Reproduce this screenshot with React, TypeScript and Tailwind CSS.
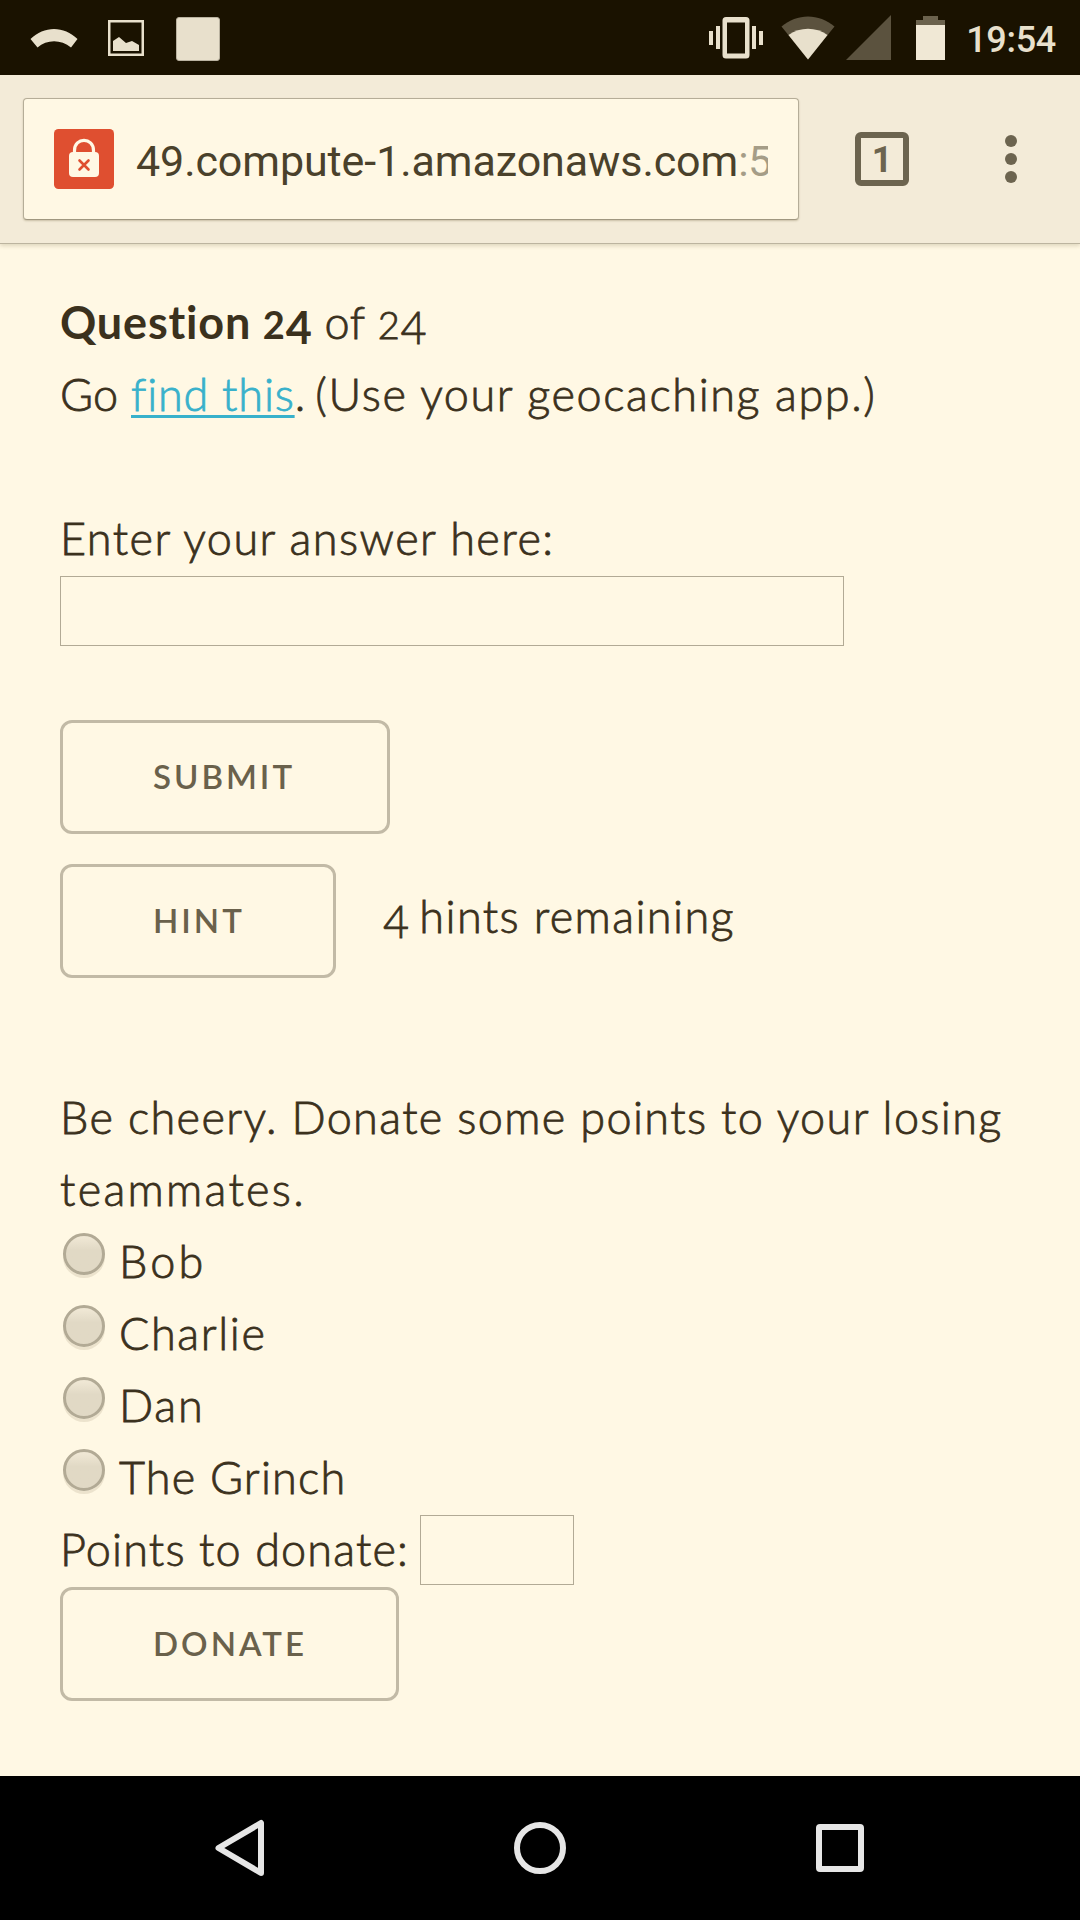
import type { ReactNode } from "react";

function StatusBar() {
  return (
    <header className="flex h-[75px] items-center justify-between bg-[#1a1200] pl-[30px] pr-[24px]">
      <div className="flex items-center">
        <svg width="48" height="24" viewBox="0 0 48 24" className="text-[#e8e0cc]">
          <path d="M0.5 13C14-0.5 34-0.5 47.5 13L41 21.500C31 13 17 13 7.500 21.500Z" fill="currentColor" />
        </svg>
        <svg width="36" height="36" viewBox="0 0 36 36" className="ml-[30px]">
          <path d="M1.250 1.250H34.750V34.750H1.250Z" fill="none" stroke="#e8e0cc" strokeWidth="2.500" />
          <path d="M5 31V21L11 17L18 23L24 21L31 25V31Z" fill="#e8e0cc" />
        </svg>
        <div className="ml-[32px] mt-[2px] h-[44px] w-[44px] rounded-[3px] border border-[#b9b2a0] bg-[#e8e0cc]" />
      </div>
      <div className="flex items-center">
        <svg width="54" height="42" viewBox="0 0 54 42" fill="#e8e0cc">
          <path d="M0 14h4v14H0zM7 9h4v23H7zM43 9h4v23h-4zM50 14h4v14h-4z" />
          <path fillRule="evenodd" d="M17 0H37A3.500 3.500 0 0 1 40.500 3.500V38A3.500 3.500 0 0 1 37 41.500H17A3.500 3.500 0 0 1 13.500 38V3.500A3.500 3.500 0 0 1 17 0ZM18 5.500V36.500H36V5.500Z" />
        </svg>
        <svg width="54" height="44" viewBox="0 0 54 44" className="ml-[18px]">
          <path d="M0.500 10.500C16-3 38-3 53.500 10.500L27 43.500Z" fill="#5b523e" />
          <path d="M7.500 19C19 10.500 35 10.500 46.500 19L27 43.500Z" fill="#e8e0cc" />
        </svg>
        <svg width="45" height="45" viewBox="0 0 45 45" className="ml-[11px]">
          <path d="M45 0V45H0Z" fill="#5b523e" />
        </svg>
        <svg width="29" height="44" viewBox="0 0 29 44" className="ml-[25px]">
          <path d="M7 0H22V4H29V9H0V4H7Z" fill="#6b624d" />
          <path d="M0 9H29V44H0Z" fill="#f0e8d5" />
        </svg>
        <span className="ml-[21px] mt-[4px] font-[Roboto,sans-serif] text-[36px] font-medium tracking-[-0.3px] text-[#e8e0cc]">
          19:54
        </span>
      </div>
    </header>
  );
}

function Toolbar() {
  return (
    <div className="flex h-[169px] items-center border-b border-[#bcb49f] bg-[#f3ebd8] pl-[23px] shadow-[0_2px_4px_rgba(80,65,20,0.18)]">
      <div className="flex h-[122px] w-[776px] items-center rounded-[4px] border border-b-[#a09780] border-l-[#b5ad98] border-r-[#b5ad98] border-t-[#b5ad98] bg-[#fff8e4] pl-[30px] pr-[30px] shadow-[0_1px_2px_rgba(80,65,20,0.25)]">
        <svg width="60" height="60" viewBox="0 0 60 60" className="shrink-0">
          <rect width="60" height="60" rx="4.500" fill="#df4f30" />
          <path d="M20.500 26V21.500C20.500 8 39.500 8 39.500 21.500V26" fill="none" stroke="#fff8e4" strokeWidth="3.200" />
          <rect x="15" y="23" width="30" height="25" rx="4" fill="#fff8e4" />
          <path d="M25.500 31.500L34.500 40.500M34.500 31.500L25.500 40.500" stroke="#df4f30" strokeWidth="2.600" strokeLinecap="round" />
        </svg>
        <div className="ml-[22px] mt-[3px] flex-1 overflow-hidden whitespace-nowrap font-[Roboto,sans-serif] text-[43px] leading-[60px] tracking-[-0.08px] text-[#4a412b]">
          49.compute-1.amazonaws.com<span className="tracking-[-0.5px] text-[#a59d87]">:5</span>
        </div>
      </div>
      <div className="ml-[56px] flex h-[54px] w-[54px] items-center justify-center rounded-[6px] border-6 border-[#6c644f] pt-[2px] font-[Roboto,sans-serif] text-[36px] font-bold leading-none text-[#6c644f]">
        1
      </div>
      <div className="ml-[96px] flex flex-col gap-[6px]">
        <i className="h-3 w-3 rounded-full bg-[#6c644f]" />
        <i className="h-3 w-3 rounded-full bg-[#6c644f]" />
        <i className="h-3 w-3 rounded-full bg-[#6c644f]" />
      </div>
    </div>
  );
}

/** Old-style figures: an x-height 2, and a 4 that hangs below the baseline. */
function Num({ value }: { value: string }) {
  return (
    <>
      {value.split("").map((d, i) => (
        <span key={i} className={d === "4" ? "relative top-[5px] text-[45px]" : "text-[38px]"}>
          {d}
        </span>
      ))}
    </>
  );
}

function Button({ children, width }: { children: ReactNode; width: string }) {
  return (
    <button
      className={`${width} flex h-[114px] shrink-0 items-center rounded-[12px] border-3 border-[#c2baa6] pb-[2px] pl-[90px] text-[33px] font-semibold leading-none tracking-[3px] text-[#6a614b] [-webkit-text-stroke:0px]`}
    >
      {children}
    </button>
  );
}

const teammates: { name: string; spacing: string }[] = [
  { name: "Bob", spacing: "tracking-[3.2px]" },
  { name: "Charlie", spacing: "tracking-[1.6px]" },
  { name: "Dan", spacing: "tracking-[1.8px]" },
  { name: "The Grinch", spacing: "tracking-[1.2px]" },
];

function Page() {
  return (
    <main className="flex h-[1532px] flex-col items-start pl-[60px] pt-[42px] font-[Lato,sans-serif] text-[45px] font-light leading-[72px] text-[#3b311d] [-webkit-text-stroke:0.8px]">
      <p className="h-[72px] whitespace-nowrap">
        <b className="font-bold tracking-[0.8px] [-webkit-text-stroke:0px]">
          Question <Num value="24" />
        </b>
        <span className="ml-[12px] tracking-[0.6px]">
          of <Num value="24" />
        </span>
      </p>
      <p className="h-[72px] whitespace-nowrap tracking-[1.6px]">
        <span className="tracking-[0.3px]">Go </span>
        <a className="tracking-[0.8px] text-[#38b1cb] underline decoration-[3px] underline-offset-[4px] [text-decoration-skip-ink:none]">
          find this
        </a>
        <span className="tracking-[-1px]">. </span>
        (Use your geocaching app.)
      </p>
      <p className="mt-[72px] h-[74px] tracking-[1.45px]">Enter your answer here:</p>
      <input className="h-[70px] w-[784px] border border-[#b2aa95]" />
      <div className="mt-[74px]">
        <Button width="w-[330px]">SUBMIT</Button>
      </div>
      <div className="mt-[30px] flex">
        <Button width="w-[276px]">HINT</Button>
        <span className="ml-[47px] mt-[16px] tracking-[1.4px]">
          <span className="tracking-[-1px]">
            <Num value="4" />{" "}
          </span>
          hints remaining
        </span>
      </div>
      <p className="mt-[103px] tracking-[1.37px]">
        Be cheery. Donate some points to your losing
        <br />
        <span className="tracking-[2.3px]">teammates.</span>
      </p>
      {teammates.map(({ name, spacing }) => (
        <label key={name} className="flex h-[72px] pl-[3px]">
          <span className="mt-[8px] h-[42px] w-[42px] rounded-full border-3 border-[#b2aa95] bg-linear-to-b from-[#efe7d4] from-5% to-[#e1d9c5] to-40% shadow-[0_3px_0_rgba(100,85,40,0.12)]" />
          <span className={`${spacing} ml-[14px]`}>{name}</span>
        </label>
      ))}
      <div className="flex h-[74px]">
        <span className="w-[360px] tracking-[1.15px]">Points to donate:</span>
        <input className="mt-[2px] h-[70px] w-[154px] border border-[#b2aa95]" />
      </div>
      <Button width="w-[339px]">DONATE</Button>
    </main>
  );
}

function NavBar() {
  return (
    <nav className="flex h-[144px] items-center bg-black">
      <svg width="1080" height="144" viewBox="0 0 1080 144" fill="none" stroke="#e6e6e6" strokeWidth="6" strokeLinejoin="round">
        <path d="M218.500 72L261 47V97Z" />
        <circle cx="540" cy="72" r="23" />
        <rect x="819" y="51" width="42" height="42" rx="1" />
      </svg>
    </nav>
  );
}

export default function App() {
  return (
    <div className="flex h-[1920px] w-[1080px] flex-col overflow-hidden bg-[#fff8e4]">
      <StatusBar />
      <Toolbar />
      <Page />
      <NavBar />
    </div>
  );
}
